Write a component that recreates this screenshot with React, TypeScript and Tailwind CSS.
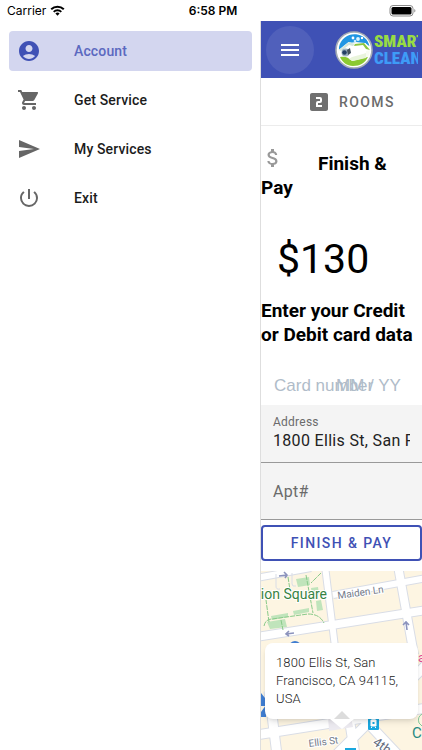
import type { ReactNode } from "react";
import {
  MdAccountCircle,
  MdShoppingCart,
  MdSend,
  MdPowerSettingsNew,
  MdMenu,
  MdLooksTwo,
  MdAttachMoney,
} from "react-icons/md";

function StatusBar() {
  return (
    <header className="relative flex h-[21px] items-center px-[7px] font-['Inter',sans-serif] text-xs text-black">
      <span>Carrier</span>
      <svg className="ml-1" width="15" height="11" viewBox="0 0 15 11" aria-label="Wi-Fi">
        <path d="M1.200 4.200a9 9 0 0 1 12.600 0" fill="none" stroke="#000" strokeWidth="2" />
        <path d="M3.700 6.800a5.400 5.400 0 0 1 7.600 0" fill="none" stroke="#000" strokeWidth="1.900" />
        <path d="M7.500 10.800 5.400 8.600a3 3 0 0 1 4.200 0Z" fill="#000" />
      </svg>
      <span className="absolute inset-x-0 text-center font-semibold ml-1">6:58 PM</span>
      <svg className="ml-auto -mr-0.5" width="28" height="13" viewBox="0 0 28 13" aria-label="Battery">
        <rect x="1" y="1.5" width="23" height="10.5" rx="3" fill="none" stroke="#8b8b8b" />
        <rect x="2.5" y="3" width="20" height="7.5" rx="1.5" fill="#000" />
        <path d="M25.3 5v3.6c1.5-.6 1.5-3 0-3.6Z" fill="#8b8b8b" />
      </svg>
    </header>
  );
}

function NavItem({ icon, label, active = false }: { icon: ReactNode; label: string; active?: boolean }) {
  return (
    <a
      href="#"
      aria-current={active ? "page" : undefined}
      className={
        "flex h-10 items-center gap-[33px] rounded px-2 text-sm font-medium tracking-[0.01em] " +
        (active ? "bg-[#d3d6ef] text-[#5b69c0]" : "text-[#1c1c1c]")
      }
    >
      <span className={active ? "w-6 text-2xl text-[#3f51b5]" : "w-6 text-2xl text-[#666]"}>{icon}</span>
      <span>{label}</span>
    </a>
  );
}

function Logo() {
  return (
    <div className="flex min-w-0 flex-1 items-center overflow-hidden">
      <svg className="shrink-0" width="40" height="40" viewBox="0 0 40 40" aria-label="Smart Clean logo">
        <circle cx="20" cy="20" r="18" fill="#fff" stroke="#a5adb5" strokeWidth="1.6" />
        <circle cx="20" cy="20" r="15.8" fill="#f8fbf2" />
        <path d="M5 17C7 8 15 3.500 22 4.300c7 .8 12 5 13.500 12L31 13l-9-1-7 1-10 8Z" fill="#2196e3" />
        <path d="m4.500 20 10-8 7 2 10-1 4.500 7-4 1v8l-13 3-8-5H5Z" fill="#fff" />
        <path d="m5 20 10-8 6 2-2 2-4-1-8 6Z" fill="#d3e6dc" />
        <path d="m21 14 9-1 6 7-4-1-3-4-9 1Z" fill="#8ac63f" />
        <path d="M6 27c5-1 8 0 12 4l12-3 4-1c-3 6-8 9-15 9-6 0-11-4-13-9Z" fill="#8bc932" />
        <path d="m18 27 11-3 3-1v5l-13 3-4-2Z" fill="#e9f4dc" />
        <circle cx="11.500" cy="22.500" r="4" fill="#9db2c1" />
        <circle cx="10.500" cy="22.500" r="2.300" fill="#243f64" />
        <path d="m13 20 3-2 1 5-3 2Z" fill="#44525e" />
        <circle cx="19" cy="8" r="1.400" fill="#fff" />
        <circle cx="24" cy="9" r="1.900" fill="#dcf4ff" />
        <circle cx="28" cy="8" r="1.200" fill="#fff" />
        <circle cx="21" cy="11" r="1.300" fill="#c3eaff" />
      </svg>
      <div className="font-['Liberation_Sans_Narrow','Roboto_Condensed','Roboto',sans-serif] text-[17px] leading-[17px] font-black">
        <div className="text-[#98dc43]">SMART</div>
        <div className="text-[#3e9bf7]">CLEAN</div>
      </div>
    </div>
  );
}

function StreetMap() {
  return (
    <svg
      className="block h-full w-full"
      viewBox="0 0 161 179"
      preserveAspectRatio="xMinYMin slice"
      aria-label="Map of 1800 Ellis St"
    >
      <rect width="161" height="179" fill="#fdf5e2" />
      <g fill="none" stroke="#d9dde6">
        <path strokeWidth="8" d="M-5 7 50-3M64-5 75 84M72 24 166 7" />
        <path strokeWidth="10" d="M-5 66 166 39M137-5 153 84" />
        <path strokeWidth="11" d="M-5 164 166 137M8 120 16 184M87 140 94 184M75 184 166 93M105 150 137 184" />
      </g>
      <g fill="none" stroke="#fff">
        <path strokeWidth="6" d="M-5 7 50-3M64-5 75 84M72 24 166 7" />
        <path strokeWidth="8" d="M-5 66 166 39M137-5 153 84" />
        <path strokeWidth="9" d="M-5 164 166 137M8 120 16 184M87 140 94 184M75 184 166 93M105 150 137 184" />
      </g>
      <path d="m67 145 22-4 3 15-24 4Z" fill="#eceaf0" />
      <g fill="#c0e4bb">
        <path d="m35 8 13-2 1 8-12 2ZM50 17l7-1 1 7-7 1ZM55 30l5-1 2 10-6 1ZM10 45l17-3v4l-16 3ZM32 40l16-3v4l-15 3ZM6 51l18-3 2 8-17 2Z" />
      </g>
      <g fill="none" stroke="#89ca89" strokeWidth="1">
        <path d="M3 55C4 50 7 48 11 48l36-5c8 0 13 3 16 9M8 51 5 29M45 4l7 38M60 2 50 12M27 6l2 13M20 49l2 10" strokeDasharray="5 1" />
        <path d="M15 3v12q0 4 4 3M31 2v11q0 3 4 2" stroke="#d9dde6" />
      </g>
      <g fill="none" stroke="#8c93bd" strokeWidth="1.6">
        <path d="m18 5 8-1m-3-3 3 3-2 3M33 62l-8 1m3-3-3 3 3 2M146 59l-1-8m-3 3 3-3 3 3" />
      </g>
      <g fill="#3f7dd1">
        <circle cx="34" cy="76" r="6" />
        <path d="M0 122l4 5v8H0ZM0 141l5-7v12H0Z" />
      </g>
      <g fontFamily="Roboto, sans-serif">
        <text x="-17" y="28" fontSize="14" fill="#378344" stroke="#fff" strokeWidth="2" paintOrder="stroke">Union Square</text>
        <text x="77" y="28" fontSize="10" fill="#747b89" stroke="#fff" strokeWidth="2" paintOrder="stroke" transform="rotate(-8 77 28)">Maiden Ln</text>
        <text x="48" y="176" fontSize="10" fill="#747b89" stroke="#fff" strokeWidth="2" paintOrder="stroke" transform="rotate(-7 48 176)">Ellis St</text>
        <text x="111" y="173" fontSize="13" fill="#656d7d" stroke="#fff" strokeWidth="2" paintOrder="stroke" transform="rotate(35 111 173)">4th St</text>
        <text x="151" y="167" fontSize="15" fill="#278a83">Ce</text>
        <text x="157" y="91" fontSize="13" fill="#df4f97">a</text>
      </g>
      <path d="M161 143q-5 3-3 9l3 3" fill="none" stroke="#83c99a" />
      <g>
        <rect x="107" y="146" width="11" height="13" rx="1" fill="#18a7df" />
        <path d="M110 149h5v6h-5ZM111 148h3M110 157l1-1m4 1-1-1" fill="#fff" stroke="#fff" />
        <path d="M111.500 151h2v2h-2Z" fill="#18a7df" />
        <rect x="84" y="177" width="11" height="5" fill="#18a7df" />
      </g>
    </svg>
  );
}

export default function App() {
  return (
    <div className="flex h-screen flex-col overflow-hidden bg-white font-['Roboto',sans-serif]">
      <StatusBar />
      <div className="flex min-h-0 flex-1">
        <nav className="flex w-[261px] shrink-0 flex-col gap-[9px] border-r border-[#dedede] py-2.5 pr-2 pl-[9px]">
          <NavItem active icon={<MdAccountCircle />} label="Account" />
          <NavItem icon={<MdShoppingCart />} label="Get Service" />
          <NavItem icon={<MdSend />} label="My Services" />
          <NavItem icon={<MdPowerSettingsNew />} label="Exit" />
        </nav>

        <main className="flex min-w-0 flex-1 flex-col">
          <div className="flex h-[57px] shrink-0 items-center gap-5 bg-[#3f51b5] pr-1 pl-[5px]">
            <button aria-label="Menu" className="flex size-12 shrink-0 items-center justify-center rounded-full bg-[#5060bb] text-2xl text-white">
              <MdMenu />
            </button>
            <Logo />
          </div>

          <button className="flex h-12 shrink-0 items-center gap-2 border-b border-[#ececec] pl-[46px] text-sm font-medium tracking-widest text-[#6b6b6b]">
            <MdLooksTwo className="size-6 text-[#707070]" />
            ROOMS
          </button>

          <h3 className="mt-5 text-[19px] leading-6 font-bold text-black">
            <MdAttachMoney className="mr-[33px] inline-block size-6 align-bottom text-[#999] mb-1.5" />
            Finish &amp; Pay
          </h3>
          <p className="mt-8 pl-4 text-[41px] leading-[54px] text-black">$130</p>
          <h3 className="mt-[13px] text-[19px] leading-6 font-bold text-black">
            Enter your Credit or Debit card data
          </h3>

          <div className="relative mt-5 h-[38px] shrink-0 font-['Liberation_Sans',sans-serif] text-[17px]">
            <input aria-label="Card number" placeholder="Card number" className="h-full w-full bg-transparent pl-[13px] outline-none placeholder:text-[#b0bcc9]" />
            <input aria-label="Expiry date" placeholder="MM / YY" className="absolute top-0 left-[75px] h-full w-[80px] bg-transparent outline-none placeholder:text-[#b0bcc9]" />
          </div>

          <div className="flex h-[58px] shrink-0 flex-col justify-center border-b border-[#999] bg-[#f4f4f4] px-3 pb-0.5">
            <label htmlFor="address" className="text-xs leading-4 tracking-[0.02em] text-[#6b6b6b]">Address</label>
            <input id="address" defaultValue="1800 Ellis St, San Francisco, CA 94115, USA" className="h-[22px] w-full bg-transparent text-base tracking-[0.02em] text-[#222] outline-none" />
          </div>
          <div className="h-[57px] shrink-0 border-b border-[#999] bg-[#f4f4f4]">
            <input aria-label="Apt#" placeholder="Apt#" className="h-full w-full bg-transparent px-3 text-base tracking-[0.02em] outline-none placeholder:text-[#6b6b6b]" />
          </div>

          <button className="mt-[5px] h-9 shrink-0 rounded border-2 border-[#3f51b5] bg-white text-sm font-medium tracking-widest text-[#3f51b5]">
            FINISH &amp; PAY
          </button>

          <section className="relative mt-2.5 min-h-[179px] flex-1 overflow-hidden">
            <div className="absolute inset-0">
              <StreetMap />
            </div>
            <div className="absolute inset-x-1 top-[72px] rounded-lg bg-white px-[11px] py-[11px] text-[13px] leading-[18px] font-light tracking-[0.01em] text-[#222] shadow-md">
              1800 Ellis St, San Francisco, CA 94115, USA
              <svg className="absolute top-[68px] left-1/2 -translate-x-1/2" width="24" height="18" viewBox="0 0 24 18" aria-hidden="true">
                <path d="M0 8h24L12 18Z" fill="#fff" />
                <path d="M4 8 12 0l8 8Z" fill="#dcdcdc" />
              </svg>
            </div>
          </section>
        </main>
      </div>
    </div>
  );
}
